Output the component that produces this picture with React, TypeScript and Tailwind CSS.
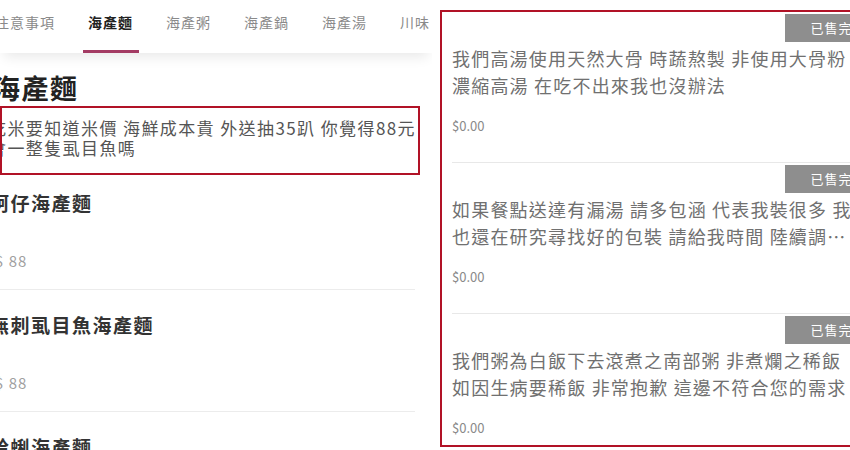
import React from "react";

const tabs = ["注意事項", "海產麵", "海產粥", "海產鍋", "海產湯", "川味"];

interface Dish {
  name: string;
  price: string;
}

const dishes: Dish[] = [
  { name: "蚵仔海產麵", price: "$ 88" },
  { name: "無刺虱目魚海產麵", price: "$ 88" },
  { name: "蛤蜊海產麵", price: "$ 88" },
];

const notes: string[][] = [
  ["我們高湯使用天然大骨 時蔬熬製 非使用大骨粉", "濃縮高湯 在吃不出來我也沒辦法"],
  ["如果餐點送達有漏湯 請多包涵 代表我裝很多 我", "也還在研究尋找好的包裝 請給我時間 陸續調…"],
  ["我們粥為白飯下去滾煮之南部粥 非煮爛之稀飯", "如因生病要稀飯 非常抱歉 這邊不符合您的需求"],
];

const TabBar = () => (
  <nav className="relative z-10 flex h-[53px] gap-[33px] bg-white shadow-[0_8px_12px_-4px_rgba(0,0,0,0.09)]">
    {tabs.map((tab, i) => (
      <div key={tab} className={`flex shrink-0 flex-col ${i === 0 ? "-ml-[5px]" : ""}`}>
        <span
          className={`pt-[12px] pb-[18px] text-[14px] leading-[20px] tracking-[1px] whitespace-nowrap ${
            i === 1 ? "font-bold text-[#222]" : "text-[#8a8a8a]"
          }`}
        >
          {tab}
        </span>
        <span className={`-mr-[6px] -ml-[5px] h-[3px] ${i === 1 ? "bg-[#a33b63]" : ""}`} />
      </div>
    ))}
  </nav>
);

const DishRow = ({ dish, first }: { dish: Dish; first: boolean }) => (
  <div className={`mr-[17px] border-b border-[#ececec] pb-[18px] ${first ? "pt-[14px]" : "pt-[21px]"}`}>
    <h3 className="-ml-[10px] text-[19px] leading-[28px] font-bold tracking-[1.5px] whitespace-nowrap text-[#333]">
      {dish.name}
    </h3>
    <p className="mt-[34px] -ml-[5px] text-[15px] leading-[20px] tracking-[1px] text-[#a0a0a0]">{dish.price}</p>
  </div>
);

const SoldOutCard = ({ lines }: { lines: string[] }) => (
  <div className="mx-[10px] border-b border-[#e8e8e8] pt-[2px] pb-[26px]">
    <div className="-mr-[10px] flex justify-end">
      <span className="flex h-[28px] w-[93px] items-center justify-center bg-[#8e8e8e] text-[13px] tracking-[1px] text-white">
        已售完
      </span>
    </div>
    <div className="mt-[3px] text-[18px] leading-[27px] tracking-[1.2px] whitespace-nowrap text-[#707070]">
      {lines.map((line) => (
        <p key={line}>{line}</p>
      ))}
    </div>
    <p className="mt-[17px] text-[13px] leading-[20px] text-[#8a8a8a]">$0.00</p>
  </div>
);

const App = () => {
  return (
    <div className="flex h-[450px] w-[850px] overflow-hidden bg-white font-['Noto_Sans_CJK_TC','Noto_Sans',sans-serif]">
      <section className="w-[432px] shrink-0 overflow-hidden">
        <TabBar />
        <h2 className="mt-[17px] -ml-[7px] text-[27px] leading-[36px] font-bold tracking-[1.5px] text-[#222]">
          海產麵
        </h2>
        <div className="mr-[12px] h-[69px] overflow-hidden border-2 border-[#b11226] pt-[10px]">
          <p className="-ml-[13px] text-[17px] leading-[20px] tracking-[1.4px] whitespace-nowrap text-[#555]">
            吃米要知道米價 海鮮成本貴 外送抽35趴 你覺得88元
            <br />
            會一整隻虱目魚嗎
          </p>
        </div>
        {dishes.map((dish, i) => (
          <DishRow key={dish.name} dish={dish} first={i === 0} />
        ))}
      </section>

      <section className="mt-[10px] ml-[8px] h-[437px] w-[440px] shrink-0 overflow-hidden border-2 border-[#b11226]">
        {notes.map((lines, i) => (
          <SoldOutCard key={i} lines={lines} />
        ))}
      </section>
    </div>
  );
};

export default App;
